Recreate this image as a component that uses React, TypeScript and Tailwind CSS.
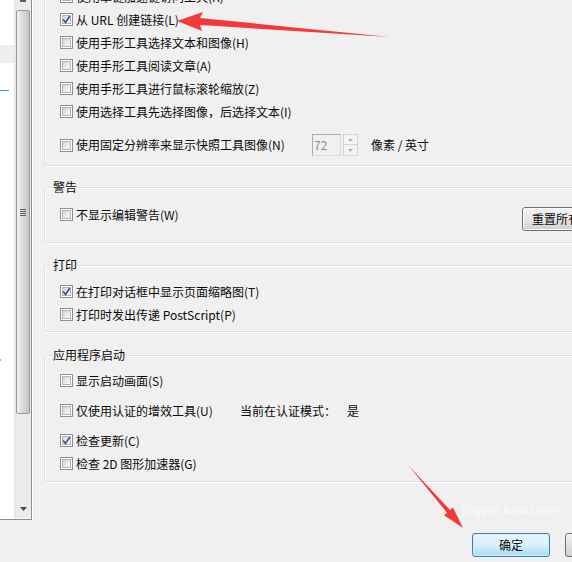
import React from "react";

function Box({ checked }: { checked?: boolean }) {
  return (
    <span className="relative inline-block w-[13px] h-[13px] shrink-0 border border-[#8e8f8f] bg-white">
      <span className="absolute inset-[1px] border border-[#b0b4b8] bg-gradient-to-br from-[#d6d6d6] to-[#fbfbfb]" />
      {checked && (
        <svg className="absolute left-[1px] top-[1px]" width="9" height="9" viewBox="0 0 9 9">
          <path d="M1.2 4.6 L3.5 7.4 L7.8 1.2" fill="none" stroke="#3c4f8c" strokeWidth="1.6" />
        </svg>
      )}
    </span>
  );
}

function Row({ label, checked }: { label: string; checked?: boolean }) {
  return (
    <div className="flex items-center h-[23px]">
      <Box checked={checked} />
      <span className="ml-[3px] leading-[16px] whitespace-nowrap">{label}</span>
    </div>
  );
}

function Label({ text }: { text: string }) {
  return (
    <span className="absolute -top-[9px] left-[7px] px-[1px] bg-[#f0f0f0] leading-[16px] whitespace-nowrap">
      {text}
    </span>
  );
}

export default function App() {
  return (
    <div className="relative w-[572px] h-[562px] overflow-hidden bg-[#f0f0f0] flex items-start font-['Noto_Sans_CJK_SC','Noto_Sans',sans-serif] text-[12px] text-[#0a0a0a]">
      {/* left list + scrollbar */}
      <div className="flex w-[32px] h-[520px] shrink-0 border-r border-b border-[#8a8d92] shadow-[1px_0_0_#ffffff]">
        <div className="w-[14px] bg-white flex flex-col">
          <div className="mt-[45px] h-[18px] bg-[#efefef]" />
          <div className="mt-[27px] h-[1px] w-[9px] bg-[#3399ff]" />
          <div className="mt-[268px] h-[2px] w-[1px] bg-[#33ccff]" />
        </div>
        <div className="w-[17px] bg-[#ebebeb] border-l border-[#e2e2e2] flex flex-col items-stretch">
          <div className="h-[10px] flex justify-center">
            <span className="w-[6px] h-[2px] bg-[#5a5a5a]" />
          </div>
          <div className="mx-[1px] h-[404px] rounded-[2px] border border-[#979797] bg-gradient-to-r from-[#f3f3f3] via-[#d9d9d9] to-[#c6c6c6] flex flex-col items-center justify-center gap-[1px]">
            <span className="w-[6px] h-[1px] bg-[#5f5f5f]" />
            <span className="w-[6px] h-[1px] bg-[#5f5f5f]" />
            <span className="w-[6px] h-[1px] bg-[#5f5f5f]" />
            <span className="w-[6px] h-[1px] bg-[#5f5f5f]" />
          </div>
          <div className="flex-1" />
          <div className="h-[19px] flex justify-center items-center border-b border-[#f8f8f8]">
            <svg width="7" height="4" viewBox="0 0 7 4">
              <path d="M0 0 H7 L3.5 4 Z" fill="#4a4a4a" />
            </svg>
          </div>
        </div>
      </div>

      {/* right content */}
      <div className="ml-[12px] w-[580px] shrink-0 flex flex-col">
        {/* group 1 (top cut) */}
        <div className="-mt-[30px] border border-[#d5dfe5] rounded-[3px] shadow-[inset_1px_1px_0_#fff,1px_1px_0_#fff] pl-[15px] pt-[14px] pb-[8px]">
          <Row label="使用单键加速键访问工具(K)" />
          <Row label="从 URL 创建链接(L)" checked />
          <Row label="使用手形工具选择文本和图像(H)" />
          <Row label="使用手形工具阅读文章(A)" />
          <Row label="使用手形工具进行鼠标滚轮缩放(Z)" />
          <Row label="使用选择工具先选择图像，后选择文本(I)" />
          <div className="mt-[10px] h-[24px] flex items-center">
            <div className="w-[252px] shrink-0 flex items-center">
              <Box />
              <span className="ml-[3px] leading-[16px] whitespace-nowrap">使用固定分辨率来显示快照工具图像(N)</span>
            </div>
            <div className="w-[29px] h-[22px] shrink-0 border border-[#acacac] border-b-[#dcdcdc] border-r-[#dcdcdc] bg-[#f0f0f0] text-[#8d8d8d] pl-[1px] leading-[20px]">
              72
            </div>
            <div className="ml-[2px] w-[15px] h-[22px] shrink-0 flex flex-col">
              <div className="h-[11px] border border-[#d4d4d4] bg-[#f4f4f4] flex items-center justify-center">
                <svg width="5" height="3" viewBox="0 0 5 3"><path d="M0 3 L2.5 0 L5 3 Z" fill="#b0b0b0" /></svg>
              </div>
              <div className="h-[11px] border border-t-0 border-[#d4d4d4] bg-[#f4f4f4] flex items-center justify-center">
                <svg width="5" height="3" viewBox="0 0 5 3"><path d="M0 0 L5 0 L2.5 3 Z" fill="#b0b0b0" /></svg>
              </div>
            </div>
            <span className="ml-[13px] whitespace-nowrap">像素 / 英寸</span>
          </div>
        </div>

        {/* 警告 */}
        <div className="relative mt-[21px] border border-[#d5dfe5] rounded-[3px] shadow-[inset_1px_1px_0_#fff,1px_1px_0_#fff] pl-[15px] pt-[15px] pb-[11px]">
          <Label text="警告" />
          <div className="flex items-start">
            <div className="w-[462px] shrink-0">
              <Row label="不显示编辑警告(W)" />
            </div>
            <div className="mt-[4px] w-[100px] h-[24px] shrink-0 rounded-[3px] border border-[#707070] bg-gradient-to-b from-[#f2f2f2] via-[#e6e6e6] to-[#d0d0d0] shadow-[inset_0_0_0_1px_#fcfcfc] pl-[9px] leading-[22px] whitespace-nowrap">
              重置所有警告
            </div>
          </div>
        </div>

        {/* 打印 */}
        <div className="relative mt-[22px] border border-[#d5dfe5] rounded-[3px] shadow-[inset_1px_1px_0_#fff,1px_1px_0_#fff] pl-[15px] pt-[14px] pb-[5px]">
          <Label text="打印" />
          <Row label="在打印对话框中显示页面缩略图(T)" checked />
          <Row label="打印时发出传递 PostScript(P)" />
        </div>

        {/* 应用程序启动 */}
        <div className="relative mt-[23px] border border-[#d5dfe5] rounded-[3px] shadow-[inset_1px_1px_0_#fff,1px_1px_0_#fff] pl-[15px] pt-[13px] pb-[6px]">
          <Label text="应用程序启动" />
          <Row label="显示启动画面(S)" />
          <div className="mt-[7px] flex items-center h-[23px]">
            <div className="w-[180px] shrink-0">
              <Row label="仅使用认证的增效工具(U)" />
            </div>
            <span className="w-[107px] shrink-0 whitespace-nowrap">当前在认证模式：</span>
            <span>是</span>
          </div>
          <div className="mt-[7px]">
            <Row label="检查更新(C)" checked />
          </div>
          <Row label="检查 2D 图形加速器(G)" />
        </div>

        {/* buttons */}
        <div className="mt-[51px] ml-[428px] flex gap-[15px]">
          <div className="w-[78px] h-[24px] shrink-0 rounded-[3px] border border-[#3c7fb1] bg-gradient-to-b from-[#eaf6fd] via-[#d9f0fc] to-[#a7d9f5] shadow-[inset_0_0_0_1px_#c9ecfc] flex items-center justify-center">
            确定
          </div>
          <div className="w-[78px] h-[24px] shrink-0 rounded-[3px] border border-[#707070] bg-gradient-to-b from-[#f2f2f2] to-[#d0d0d0]" />
        </div>
      </div>

      {/* watermark */}
      <span className="absolute left-[462px] top-[502px] text-[12px] leading-[16px] text-white opacity-70 font-['Liberation_Sans',sans-serif] whitespace-nowrap">
        jingyan.baidu.com
      </span>

      {/* red arrows */}
      <svg className="absolute left-0 top-0 pointer-events-none" width="572" height="562" viewBox="0 0 572 562">
        <polygon points="177,21 203,12 200,18 390,37 200,25 202,31" fill="#f23a3a" />
        <polygon points="408,465 450,510 453,507.5 463,528 444,515.3 447,512.7" fill="#f23a3a" />
      </svg>
    </div>
  );
}
